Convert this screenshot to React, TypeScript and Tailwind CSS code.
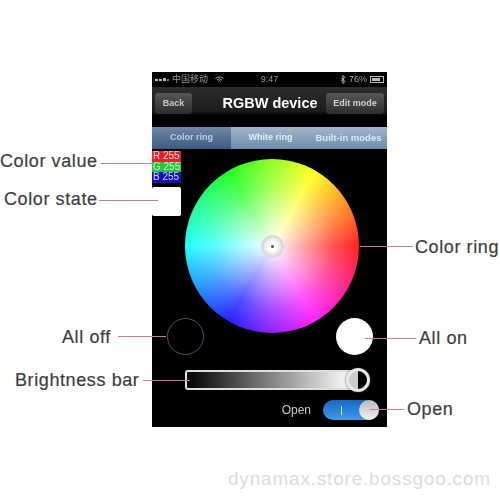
function Label({ className, children }: { className: string; children: React.ReactNode }) {
  return (
    <span className={`absolute whitespace-nowrap text-[18px] leading-5 tracking-[0.6px] text-[#3d3d3d] [-webkit-text-stroke:0.2px_#3d3d3d] ${className}`}>
      {children}
    </span>
  );
}

function Line({ className }: { className: string }) {
  return <div className={`absolute z-10 h-px bg-[#c98080] ${className}`} />;
}

export default function App() {
  return (
    <div className="relative h-[500px] w-[500px] overflow-hidden bg-white font-['Liberation_Sans',sans-serif]">
      <div className="ml-[152px] pt-[72px]">
        <div className="flex h-[355px] w-[235px] flex-col bg-black blur-[0.5px]">
          {/* status bar */}
          <div className="grid h-[15px] grid-cols-3 items-center px-[3px] text-[9px] text-[#9a9a9a]">
            <div className="flex items-center">
              <div className="flex items-end gap-px">
                <div className="h-[2px] w-[3px] bg-[#bbb]" />
                <div className="h-[2px] w-[3px] bg-[#bbb]" />
                <div className="h-[3px] w-[3px] bg-[#bbb]" />
                <div className="h-[2px] w-[2px] bg-[#777]" />
              </div>
              <span className="ml-[3px] whitespace-nowrap font-['Liberation_Sans','Noto_Sans_CJK_SC',sans-serif] text-[9px] leading-none">中国移动</span>
              <svg width="9" height="7" viewBox="0 0 9 7" className="ml-[7px] shrink-0">
                <path d="M.5 2.5a6 6 0 0 1 8 0M2 4a3.6 3.6 0 0 1 5 0M3.4 5.4a1.5 1.5 0 0 1 2.2 0" fill="none" stroke="#aaa" strokeWidth="1" />
              </svg>
            </div>
            <span className="text-center">9:47</span>
            <div className="flex items-center justify-end gap-[3px]">
              <svg width="5" height="9" viewBox="0 0 5 9">
                <path d="M0 2.5l4 4-2 2V.5l2 2-4 4" fill="none" stroke="#ccc" strokeWidth="0.9" />
              </svg>
              <span className="text-[#aaa]">76%</span>
              <div className="flex h-[7px] w-[14px] items-stretch border border-[#bbb] p-px">
                <div className="w-[8px] bg-[#bbb]" />
              </div>
            </div>
          </div>
          {/* navigation */}
          <div className="flex h-[40px] items-start justify-between bg-[linear-gradient(#2c2c2c,#1c1c1c_60%,#000_72%)] px-[3px] pt-[6px]">
            <div className="flex h-[21px] w-[37px] items-center justify-center rounded-[3px] bg-[linear-gradient(#575757,#2c2c2c)] text-[9px] font-bold text-[#c8c8c8]">
              Back
            </div>
            <span className="ml-[22px] text-[14.5px] font-bold leading-[21px] text-white">RGBW device</span>
            <div className="flex h-[21px] w-[58px] items-center justify-center rounded-[3px] bg-[linear-gradient(#575757,#2c2c2c)] text-[9px] font-bold text-[#d0d0d0]">
              Edit mode
            </div>
          </div>
          {/* tabs */}
          <div className="flex h-[22px] text-[9px] font-bold">
            <div className="flex w-[79px] items-center justify-center bg-[linear-gradient(#6f88a8,#3c5a84)] text-[#c0ccd8]">Color ring</div>
            <div className="flex w-[79px] items-center justify-center bg-[linear-gradient(#a0b6cc,#6d8cac)] text-[#e6edf3]">White ring</div>
            <div className="flex w-[77px] items-center justify-center whitespace-nowrap bg-[linear-gradient(#a0b6cc,#6d8cac)] text-[9.5px] text-[#e0e8f0]">Built-in modes</div>
          </div>
          {/* colour area */}
          <div className="flex h-[184px] items-start pl-0 pt-[2px]">
            <div className="flex w-[29px] flex-col whitespace-nowrap text-[10px] leading-[10.5px]">
              <div className="bg-[#e8202a] pl-px text-[#f8d8d8]">R 255</div>
              <div className="bg-[#22c83a] pl-px text-[#d0f4d0]">G 255</div>
              <div className="bg-[#1414b8] pl-px text-[#d0d0ff]">B 255</div>
              <div className="mt-[4px] h-[29px] rounded-[2px] bg-white" />
            </div>
            <div className="relative ml-[4px] mt-[8px] h-[174px] w-[174px] overflow-hidden rounded-full bg-[conic-gradient(from_90deg,#ff0000,#ff00ff,#0000ff,#00ffff,#00ff00,#ffff00,#ff0000)]">
              <div className="flex h-full w-full items-center justify-center rounded-full bg-[radial-gradient(circle,#ffffff_0%,#ffffffb0_22%,#ffffff50_50%,#ffffff00_85%)]">
                <div className="flex h-[23px] w-[23px] items-center justify-center rounded-full border-[3px] border-[#dcdcdc] bg-[#eeeeee]">
                  <div className="flex h-[11px] w-[11px] items-center justify-center rounded-full bg-white">
                    <div className="h-[3px] w-[3px] rounded-full bg-[#555]" />
                  </div>
                </div>
              </div>
            </div>
          </div>
          {/* on / off */}
          <div className="-mt-[15px] flex items-center justify-between pl-[15px] pr-[14px]">
            <div className="h-[37px] w-[37px] rounded-full border-[1.5px] border-[#4a5560]" />
            <div className="h-[37px] w-[37px] rounded-full bg-white" />
          </div>
          {/* brightness */}
          <div className="ml-[33px] mt-[15px] flex h-[20px] w-[174px] items-center justify-end rounded-[3px] border-2 border-[#dedede] bg-[linear-gradient(90deg,#000,#eee_90%)]">
            <div className="-mr-[13px] h-[24px] w-[24px] shrink-0 rounded-full border-[3px] border-[#e8e8e8] bg-[linear-gradient(90deg,#cccccc_50%,#000_50%)] shadow-[0_0_2px_#444]" />
          </div>
          {/* switch */}
          <div className="mt-[10px] flex items-center justify-end pr-[8px]">
            <span className="mr-[12px] text-[12px] text-[#c8c8c8]">Open</span>
            <div className="flex h-[20px] w-[56px] items-center justify-between rounded-full bg-[linear-gradient(#1668c8,#3f9bea)] pl-[18px]">
              <div className="h-[9px] w-px bg-[#cfe4f8]" />
              <div className="h-[20px] w-[20px] rounded-full bg-[linear-gradient(#b8b8b8,#f4f4f4)]" />
            </div>
          </div>
        </div>
      </div>

      {/* callouts */}
      <Label className="left-0 top-[151px]">Color value</Label>
      <Line className="left-[101px] top-[163px] w-[51px]" />
      <Label className="left-[4px] top-[189px]">Color state</Label>
      <Line className="left-[99px] top-[200px] w-[59px]" />
      <Label className="left-[415px] top-[237px]">Color ring</Label>
      <Line className="left-[360px] top-[246px] w-[53px]" />
      <Label className="left-[62px] top-[327px]">All off</Label>
      <Line className="left-[118px] top-[336px] w-[48px]" />
      <Label className="left-[419px] top-[328px]">All on</Label>
      <Line className="left-[365px] top-[338px] w-[51px]" />
      <Label className="left-[15px] top-[370px]">Brightness bar</Label>
      <Line className="left-[143px] top-[380px] w-[47px]" />
      <Label className="left-[407px] top-[399px]">Open</Label>
      <Line className="left-[370px] top-[409px] w-[34px]" />

      <span className="absolute left-[228px] top-[469px] whitespace-nowrap text-[19px] leading-5 tracking-[0.8px] text-[#dcdcdc]">
        dynamax.store.bossgoo.com
      </span>
    </div>
  );
}
